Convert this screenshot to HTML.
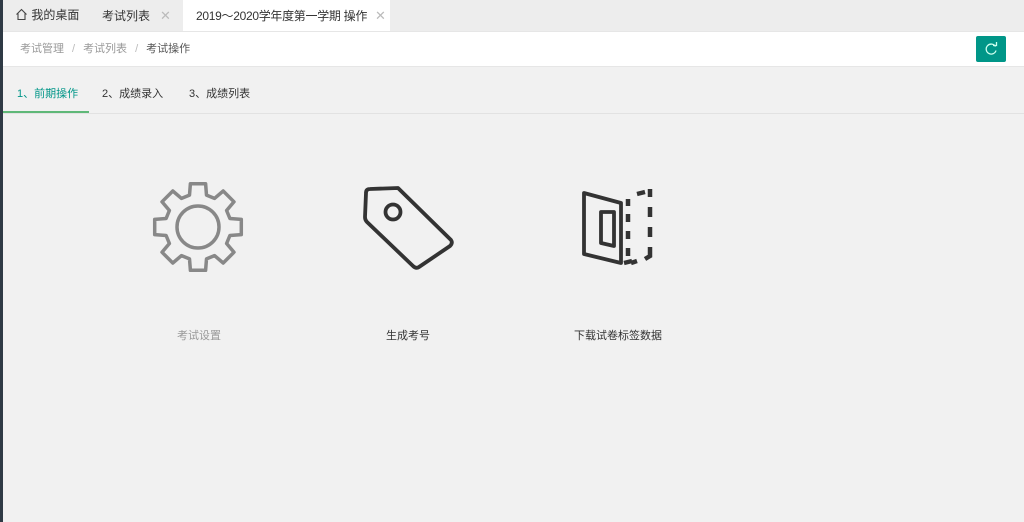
<!DOCTYPE html>
<html><head><meta charset="utf-8"><style>
*{margin:0;padding:0;box-sizing:border-box}
body{width:1024px;height:522px;overflow:hidden;background:#f1f1f1;font-family:"Liberation Sans","Noto Sans CJK SC",sans-serif;position:relative}
.lb{position:absolute;left:0;top:0;width:3px;height:522px;background:#2f3a45}
.tabs{position:absolute;left:3px;top:0;width:1021px;height:31px;background:#ededed}
.tab{position:absolute;top:0;height:31px;line-height:31px;font-size:12px;color:#333;white-space:nowrap}
.x{color:#bbb;font-size:13px;margin-left:10px}
.crumb{position:absolute;left:3px;top:31px;width:1021px;height:36px;background:#fff;border-top:1px solid #e6e6e6;border-bottom:1px solid #e6e6e6;font-size:11px;color:#999;line-height:34px;padding-left:17px}
.crumb span.s{margin:0 8px;color:#bbb}
.btn{position:absolute;right:18px;top:4px;width:30px;height:26px;background:#009688;border-radius:2px}
.steps{position:absolute;left:3px;top:67px;width:1021px;height:47px;border-bottom:1px solid #e2e2e2;font-size:11px;color:#333}
.st{position:absolute;top:0;line-height:54px}
.ul{position:absolute;left:0;top:44px;width:86px;height:2px;background:#5fb878}
.lbl{position:absolute;font-size:11px;text-align:center;width:120px}
</style></head><body>
<div class="lb"></div>
<div class="tabs">
 <div class="tab" style="left:12px"><svg width="13" height="13" viewBox="0 0 13 13" style="vertical-align:-2px"><path d="M1.5 6.5L6.5 1.5L11.5 6.5M3 5.5V11.5H10V5.5" fill="none" stroke="#444" stroke-width="1.1"/></svg> 我的桌面</div>
 <div class="tab" style="left:99px">考试列表<span class="x">✕</span></div>
 <div class="tab" style="left:180px;width:207px;background:#fff;padding-left:13px;letter-spacing:-0.3px">2019～2020学年度第一学期 操作<span class="x" style="margin-left:8px">✕</span></div>
</div>
<div class="crumb">考试管理<span class="s">/</span>考试列表<span class="s">/</span><span style="color:#555">考试操作</span>
 <div class="btn"><svg width="30" height="26" viewBox="0 0 30 26"><path d="M19.5 10.5A5 5 0 1 0 20 14.5" fill="none" stroke="#cfe" stroke-width="1.3"/><path d="M17 9.5H20.5V6" fill="none" stroke="#cfe" stroke-width="1.3"/></svg></div>
</div>
<div class="steps">
 <div class="st" style="left:14px;color:#009688">1、前期操作</div>
 <div class="st" style="left:99px">2、成绩录入</div>
 <div class="st" style="left:186px">3、成绩列表</div>
 <div class="ul"></div>
</div>
<svg style="position:absolute;left:0;top:0" width="1024" height="522">
 <path id="gear" fill="none" stroke="#888" stroke-width="3.5" stroke-linejoin="round"/>
 <circle cx="198" cy="227" r="21" fill="none" stroke="#888" stroke-width="3.5"/>
 <g fill="none" stroke="#333" stroke-width="3.8" stroke-linejoin="round">
  <path d="M370 189L398 188L451 240Q453 243 450 246L419 267Q416 269 413 266L367 222Q365 220 365 217L366 193Q366 189 370 189Z"/>
  <circle cx="393" cy="212" r="7.5"/>
  <path d="M584 193L621 203V263L584 254Z"/>
  <path d="M601 212H614V246L601 243Z"/>
 </g>
 <g fill="none" stroke="#333" stroke-width="4.5">
  <path d="M628 199V206M628 214V222M628 231V239M628 248V256M624 263L632 261"/>
  <path d="M637 194L645 192M650 189V197M650 207V217M650 227V237M650 247V256L645 259M637 261L631 263"/>
 </g>
</svg>
<div class="lbl" style="left:139px;top:327px;color:#999">考试设置</div>
<div class="lbl" style="left:348px;top:327px;color:#333">生成考号</div>
<div class="lbl" style="left:558px;top:327px;color:#333">下载试卷标签数据</div>
<script>
var cx=198,cy=227,d="";
for(var k=0;k<8;k++){var t=45*k;[[t-15,33],[t-10,44],[t+10,44],[t+15,33]].forEach(function(p,i){var a=p[0]*Math.PI/180;d+=(k==0&&i==0?"M":"L")+(cx+p[1]*Math.sin(a)).toFixed(1)+" "+(cy-p[1]*Math.cos(a)).toFixed(1);});}
document.getElementById("gear").setAttribute("d",d+"Z");
</script>
</body></html>
